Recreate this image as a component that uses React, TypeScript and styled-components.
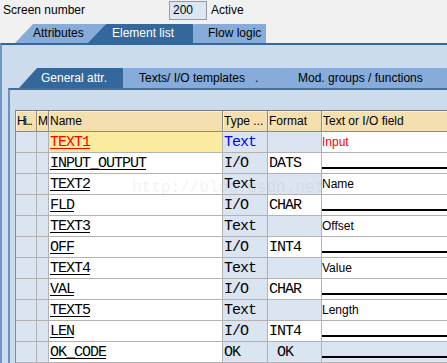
import styled, { createGlobalStyle } from 'styled-components';

const GlobalStyle = createGlobalStyle`
  html, body {
    margin: 0;
    padding: 0;
    background: #f1f1f1;
    overflow: hidden;
  }
  body {
    font-family: 'Liberation Sans', Arial, sans-serif;
    font-size: 12px;
    color: #000;
  }
`;

const SANS = `'Liberation Sans', Arial, sans-serif`;
const MONO = `'Liberation Mono', 'Courier New', monospace`;

const Page = styled.div`
  position: relative;
  width: 447px;
  height: 363px;
  overflow: hidden;
  display: flex;
  flex-direction: column;
`;

const TopBar = styled.div`
  display: flex;
  align-items: center;
  height: 20px;
  padding-left: 3px;
`;

const Label = styled.span`
  width: 166px;
`;

const NumberBox = styled.span`
  box-sizing: border-box;
  width: 38px;
  height: 19px;
  margin-top: 1px;
  padding-left: 3px;
  line-height: 17px;
  background: #dae6f2;
  border: 1px solid #9a9a9a;
`;

const Status = styled.span`
  margin-left: 4px;
`;

const TabRow = styled.div<{ $height: number; $indent: number; $top: number }>`
  display: flex;
  height: ${({ $height }) => $height}px;
  margin-top: ${({ $top }) => $top}px;
  padding-left: ${({ $indent }) => $indent}px;
  overflow: hidden;
  flex-shrink: 0;
`;

const Tab = styled.div<{ $active?: boolean; $w: number; $pad: number; $z: number; $h: number }>`
  position: relative;
  z-index: ${({ $z }) => $z};
  flex-shrink: 0;
  box-sizing: border-box;
  width: ${({ $w }) => $w}px;
  height: ${({ $h }) => $h}px;
  line-height: ${({ $h }) => $h}px;
  padding-left: ${({ $pad }) => $pad}px;
  white-space: pre;
  font-family: ${SANS};
  font-size: 12px;
  background: ${({ $active }) => ($active ? '#35689a' : '#87acd9')};
  color: ${({ $active }) => ($active ? '#fff' : '#000')};
  clip-path: polygon(18px 0, 100% 0, 100% 100%, 0 100%);

  & + & {
    margin-left: -17px;
  }
`;

const OuterPanel = styled.div`
  flex: 1;
  display: flex;
  flex-direction: column;
  border-top: 2px solid #35689a;
  border-left: 2px solid #7296c2;
  background: #cddcec;
`;

const InnerPanel = styled.div`
  flex: 1;
  margin-left: 6px;
  padding: 20px 0 0 5px;
  border-top: 2px solid #41719f;
  border-left: 2px solid #6e92bf;
`;

const Grid = styled.div`
  display: grid;
  grid-template-columns: 21px 12px 174px 45px 54px 1fr;
  grid-auto-rows: 21px;
  border-left: 1px solid #8a8a8a;
  border-top: 1px solid #7a7a7a;
`;

const HeadCell = styled.div<{ $last?: boolean; $tight?: boolean }>`
  box-sizing: border-box;
  padding: 1px 0 0 1px;
  line-height: 19px;
  white-space: nowrap;
  overflow: hidden;
  font-family: ${SANS};
  font-size: 12px;
  letter-spacing: ${({ $tight }) => ($tight ? '-1.4px' : '0')};
  background: #f4e0ae;
  border-bottom: 1px solid #8a8a8a;
  border-right: ${({ $last }) => ($last ? 'none' : '1px solid #8a8a8a')};
  box-shadow: inset 1px 1px 0 #fbf1d6;
`;

type Tone = 'blue' | 'white' | 'yellow';
const tones: Record<Tone, string> = {
  blue: '#dbe5f1',
  white: '#ffffff',
  yellow: '#fbeb9f',
};

const Cell = styled.div<{ $tone: Tone; $last?: boolean }>`
  box-sizing: border-box;
  position: relative;
  overflow: hidden;
  white-space: pre;
  background: ${({ $tone }) => tones[$tone]};
  border-bottom: 1px solid #b2b2b2;
  border-right: ${({ $last }) => ($last ? 'none' : '1px solid #b2b2b2')};
`;

const MonoText = styled.span<{ $color?: string; $underline?: boolean }>`
  display: block;
  padding: 2px 0 0 1px;
  line-height: 18px;
  font-family: ${MONO};
  font-size: 15px;
  letter-spacing: -1px;
  color: ${({ $color }) => $color || '#000'};
  text-decoration: ${({ $underline }) => ($underline ? 'underline' : 'none')};
  text-underline-offset: 2px;
`;

const FieldText = styled.span<{ $color?: string }>`
  display: block;
  line-height: 20px;
  font-family: ${SANS};
  font-size: 12px;
  color: ${({ $color }) => $color || '#000'};
`;

const FieldLine = styled.span`
  position: absolute;
  left: 0;
  right: 0;
  bottom: 4px;
  height: 2px;
  background: #000;
`;

const Watermark = styled.div`
  position: absolute;
  left: 132px;
  top: 179px;
  font-family: ${MONO};
  font-size: 16px;
  color: rgba(140, 140, 140, 0.12);
  pointer-events: none;
  white-space: nowrap;
`;

type Row = {
  name: string;
  type: 'Text' | 'I/O' | 'OK';
  format: string;
  field: string;
  current?: boolean;
};

const rows: Row[] = [
  { name: 'TEXT1', type: 'Text', format: '', field: 'Input', current: true },
  { name: 'INPUT_OUTPUT', type: 'I/O', format: 'DATS', field: '' },
  { name: 'TEXT2', type: 'Text', format: '', field: 'Name' },
  { name: 'FLD', type: 'I/O', format: 'CHAR', field: '' },
  { name: 'TEXT3', type: 'Text', format: '', field: 'Offset' },
  { name: 'OFF', type: 'I/O', format: 'INT4', field: '' },
  { name: 'TEXT4', type: 'Text', format: '', field: 'Value' },
  { name: 'VAL', type: 'I/O', format: 'CHAR', field: '' },
  { name: 'TEXT5', type: 'Text', format: '', field: 'Length' },
  { name: 'LEN', type: 'I/O', format: 'INT4', field: '' },
  { name: 'OK_CODE', type: 'OK', format: ' OK', field: '' },
];

const outerTabs = [
  { label: 'Attributes', w: 90, pad: 18 },
  { label: 'Element list', w: 105, pad: 24, active: true },
  { label: 'Flow logic', w: 90, pad: 32 },
];

const innerTabs = [
  { label: 'General attr.', w: 104, pad: 22, active: true },
  { label: 'Texts/ I/O templates   .', w: 176, pad: 33 },
  { label: 'Mod. groups / functions', w: 177, pad: 33 },
  { label: '', w: 60, pad: 33 },
];

const headers = ['Hi...', 'M', 'Name', 'Type ...', 'Format', 'Text or I/O field'];

const App = () => {
  return (
    <Page>
      <GlobalStyle />
      <TopBar>
        <Label>Screen number</Label>
        <NumberBox>200</NumberBox>
        <Status>Active</Status>
      </TopBar>

      <TabRow $height={19} $indent={15} $top={4}>
        {outerTabs.map((t, i) => (
          <Tab key={t.label} $active={t.active} $w={t.w} $pad={t.pad} $h={19} $z={t.active ? 10 : 5 - i}>
            {t.label}
          </Tab>
        ))}
      </TabRow>

      <OuterPanel>
        <TabRow $height={20} $indent={17} $top={23}>
          {innerTabs.map((t, i) => (
            <Tab key={i} $active={t.active} $w={t.w} $pad={t.pad} $h={20} $z={t.active ? 10 : 5 - i}>
              {t.label}
            </Tab>
          ))}
        </TabRow>

        <InnerPanel>
          <Grid>
            {headers.map((h, i) => (
              <HeadCell key={h} $last={i === headers.length - 1} $tight={i === 0}>
                {h}
              </HeadCell>
            ))}
            {rows.map((r) => {
              const isText = r.type === 'Text';
              const isOk = r.type === 'OK';
              return [
                <Cell key={r.name + 'h'} $tone="blue" />,
                <Cell key={r.name + 'm'} $tone="blue" />,
                <Cell key={r.name + 'n'} $tone={r.current ? 'yellow' : 'white'}>
                  <MonoText $underline $color={r.current ? '#ff0000' : undefined}>
                    {r.name}
                  </MonoText>
                </Cell>,
                <Cell key={r.name + 't'} $tone="blue">
                  <MonoText $color={r.current ? '#0000ff' : undefined}>{r.type}</MonoText>
                </Cell>,
                <Cell key={r.name + 'f'} $tone={isText || isOk ? 'blue' : 'white'}>
                  <MonoText>{r.format}</MonoText>
                </Cell>,
                <Cell key={r.name + 'x'} $tone={isOk ? 'blue' : 'white'} $last>
                  {isText ? (
                    <FieldText $color={r.current ? '#ff0000' : undefined}>{r.field}</FieldText>
                  ) : (
                    <FieldLine />
                  )}
                </Cell>,
              ];
            })}
          </Grid>
        </InnerPanel>
      </OuterPanel>

      <Watermark>http://blog.csdn.net/</Watermark>
    </Page>
  );
};

export default App;
